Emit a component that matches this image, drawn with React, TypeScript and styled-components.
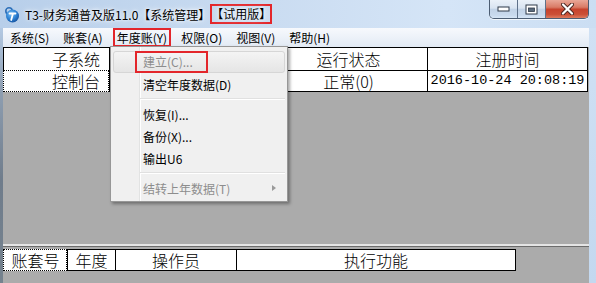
import React from 'react'
import styled, { createGlobalStyle, css } from 'styled-components'

const uiFont = `"Noto Sans CJK SC", "Microsoft YaHei", sans-serif`
const red = '#e3262b'

const GlobalStyle = createGlobalStyle`
  html, body {
    margin: 0;
    padding: 0;
    width: 596px;
    height: 283px;
    overflow: hidden;
    background: #ababab;
  }
  #root {
    width: 596px;
    height: 283px;
  }
`

const StyledWindow = styled.div`
  position: relative;
  width: 596px;
  height: 283px;
  display: flex;
  flex-direction: column;
  overflow: hidden;
  font-family: ${uiFont};
  background: #c2d6ee;
`

const StyledTitleBar = styled.div`
  flex: none;
  height: 28px;
  display: flex;
  align-items: flex-start;
  padding: 0 7px 0 3px;
  background: linear-gradient(to right, #b8cfea 0%, #cadcf1 45%, #d5e5f7 75%, #cbdef3 100%);
`

const StyledAppIcon = styled.svg`
  flex: none;
  margin-top: 6px;
`

const StyledTitle = styled.div`
  flex: 1;
  height: 28px;
  margin-left: 5px;
  display: flex;
  align-items: center;
  font-size: 12px;
  color: #000;
  white-space: nowrap;
  text-shadow: 0 0 6px #fff, 0 0 3px #fff;
`

const StyledTitleMark = styled.span`
  display: inline-block;
  line-height: 16px;
  padding: 2px 1px;
  box-shadow: inset 0 0 0 2px ${red};
`

const StyledCaptionButtons = styled.div`
  flex: none;
  display: flex;
  height: 18px;
  border: 1px solid #4c5d73;
  border-top: none;
  border-radius: 0 0 5px 5px;
  overflow: hidden;
  box-shadow: 0 1px 0 rgba(255, 255, 255, 0.7);
`

const StyledCaptionButton = styled.div<{ $close?: boolean }>`
  width: ${(p) => (p.$close ? 42 : 27)}px;
  display: flex;
  align-items: center;
  justify-content: center;
  background: ${(p) =>
    p.$close
      ? 'linear-gradient(#e9a797 0%, #d97b66 40%, #c7432d 52%, #cb4f36 80%, #de7b5f 100%)'
      : 'linear-gradient(#eaf1f9 0%, #d9e4f1 45%, #c2d3e7 52%, #c9daee 85%, #d7e6f6 100%)'};

  & + & {
    border-left: 1px solid #5f7189;
  }
`

const StyledBody = styled.div`
  flex: 1;
  display: flex;
  min-height: 0;
`

const StyledLeftFrame = styled.div`
  flex: none;
  width: 3px;
  background: linear-gradient(#b3c9e3 0%, #8e9eb1 25%, #6f7c8b 60%, #76838f 100%);
`

const StyledClient = styled.div`
  flex: none;
  width: 586px;
  display: flex;
  flex-direction: column;
`

const StyledRightFrame = styled.div`
  flex: 1;
  background: linear-gradient(#d0e1f4, #c3d8ef);
`

const StyledMenuBar = styled.div`
  flex: none;
  height: 19px;
  display: flex;
  font-size: 12px;
  color: #000;
  background: linear-gradient(#f7f9fd, #e2eaf4);
`

const StyledMenuItem = styled.div<{ $marked?: boolean }>`
  display: flex;
  align-items: center;
  padding: 0 7px;
  white-space: nowrap;

  ${(p) =>
    p.$marked &&
    css`
      padding: 0 4px;
      margin: 0 3px;
      box-shadow: inset 0 0 0 2px ${red};
    `}
`

const StyledWorkspace = styled.div`
  flex: 1;
  display: flex;
  flex-direction: column;
  padding-bottom: 12px;
  background: #ababab;
  font-family: ${uiFont};
  font-size: 16px;
  font-weight: 300;
  color: #000;
`

const StyledGrid = styled.div<{ $columns: string }>`
  align-self: flex-start;
  display: grid;
  grid-template-columns: ${(p) => p.$columns};
  background: #fff;
  border-left: 1px solid #000;
  border-top: 1px solid #000;
`

const StyledCell = styled.div<{
  $height: number
  $align?: 'center' | 'right'
  $focused?: boolean
  $mono?: boolean
}>`
  position: relative;
  height: ${(p) => p.$height}px;
  display: flex;
  align-items: center;
  justify-content: ${(p) => (p.$align === 'right' ? 'flex-end' : 'center')};
  padding-right: ${(p) => (p.$align === 'right' ? 9 : 0)}px;
  border-right: 1px solid #000;
  border-bottom: 1px solid #000;
  white-space: nowrap;
  line-height: 1;

  ${(p) =>
    p.$mono &&
    css`
      font-family: 'Liberation Mono', monospace;
      font-weight: 400;
      font-size: 13.5px;
    `}

  ${(p) =>
    p.$focused &&
    css`
      &::before,
      &::after {
        content: '';
        position: absolute;
        top: -1px;
        left: -1px;
        right: 0;
        bottom: -1px;
        border: 1px solid #fff;
        pointer-events: none;
      }
      &::after {
        border-style: dotted;
        border-color: #000;
      }
    `}
`

const StyledSpacer = styled.div`
  flex: 1;
`

const StyledSplitter = styled.div`
  flex: none;
  height: 0;
  margin-bottom: 2px;
  border-top: 2px solid #e4e4e4;
  border-bottom: 1px solid #6c6c6c;
`

const StyledDropdown = styled.div`
  position: absolute;
  left: 110px;
  top: 46px;
  width: 178px;
  box-sizing: border-box;
  padding: 4px 2px 2px;
  border: 1px solid #979797;
  background: linear-gradient(
    to right,
    #f0f0f0 28px,
    #e2e3e3 28px,
    #e2e3e3 29px,
    #ffffff 29px,
    #ffffff 30px,
    #f0f0f0 30px
  );
  box-shadow: 2px 2px 3px rgba(0, 0, 0, 0.35);
  font-family: ${uiFont};
  font-size: 12px;
`

const StyledDropItem = styled.div<{ $disabled?: boolean; $hover?: boolean }>`
  height: 22px;
  box-sizing: border-box;
  display: flex;
  align-items: center;
  padding: 0 8px 0 29px;
  border: 1px solid transparent;
  border-radius: 3px;
  color: ${(p) => (p.$disabled ? '#8d8d8d' : '#000')};
  white-space: nowrap;

  ${(p) =>
    p.$hover &&
    css`
      border-color: #d6d6d6;
      background: linear-gradient(#f4f4f4, #e5e5e5);
    `}
`

const StyledDropMark = styled.span`
  display: inline-block;
  line-height: 18px;
  margin-left: -6px;
  padding: 0 13px 0 6px;
  outline: 2px solid ${red};
`

const StyledDropSeparator = styled.div`
  height: 8px;
  margin-left: 27px;
  display: flex;
  align-items: center;

  &::before {
    content: '';
    flex: 1;
    height: 2px;
    background: linear-gradient(#e0e0e0 50%, #ffffff 50%);
  }
`

const StyledSubArrow = styled.span`
  margin-left: auto;
  width: 0;
  height: 0;
  border-top: 3.5px solid transparent;
  border-bottom: 3.5px solid transparent;
  border-left: 4px solid #9a9a9a;
`

const AppIcon = () => (
  <StyledAppIcon width="17" height="17" viewBox="0 0 17 17">
    <defs>
      <radialGradient id="ball" cx="0.4" cy="0.35" r="0.7">
        <stop offset="0" stopColor="#7cc0f4" />
        <stop offset="0.6" stopColor="#2a7fd2" />
        <stop offset="1" stopColor="#164f9a" />
      </radialGradient>
    </defs>
    <circle cx="6" cy="5" r="3.2" fill="none" stroke="#2d6fb8" strokeWidth="1.6" />
    <circle cx="9.5" cy="10" r="6.5" fill="url(#ball)" />
    <path d="M6.5 7.5h6M10 7.5l-1.8 6.5" stroke="#fff" strokeWidth="1.8" strokeLinecap="round" fill="none" />
  </StyledAppIcon>
)

const MinimizeGlyph = () => (
  <svg width="13" height="6" viewBox="0 0 13 6">
    <rect x="1" y="1" width="11" height="4" fill="#fff" stroke="#2f3b4a" strokeWidth="1" />
  </svg>
)

const MaximizeGlyph = () => (
  <svg width="13" height="11" viewBox="0 0 13 11">
    <rect x="1" y="1" width="11" height="9" fill="#fff" stroke="#2f3b4a" strokeWidth="1" />
    <rect x="3.5" y="4" width="6" height="3.5" fill="#5a6a7c" stroke="#2f3b4a" strokeWidth="0.8" />
  </svg>
)

const CloseGlyph = () => (
  <svg width="13" height="12" viewBox="0 0 13 12">
    <path d="M2 1.5l9 9M11 1.5l-9 9" stroke="#4a2520" strokeWidth="4" strokeLinecap="round" />
    <path d="M2 1.5l9 9M11 1.5l-9 9" stroke="#fff" strokeWidth="2.2" strokeLinecap="round" />
  </svg>
)

const topColumns = '106px 160px 158px 160px'
const bottomColumns = '64px 48px 121px 279px'

export default function App() {
  return (
    <>
      <GlobalStyle />
      <StyledWindow>
        <StyledTitleBar>
          <AppIcon />
          <StyledTitle>
            T3-财务通普及版11.0【系统管理】
            <StyledTitleMark>【试用版】</StyledTitleMark>
          </StyledTitle>
          <StyledCaptionButtons>
            <StyledCaptionButton>
              <MinimizeGlyph />
            </StyledCaptionButton>
            <StyledCaptionButton>
              <MaximizeGlyph />
            </StyledCaptionButton>
            <StyledCaptionButton $close>
              <CloseGlyph />
            </StyledCaptionButton>
          </StyledCaptionButtons>
        </StyledTitleBar>

        <StyledBody>
          <StyledLeftFrame />
          <StyledClient>
            <StyledMenuBar>
              <StyledMenuItem>系统(S)</StyledMenuItem>
              <StyledMenuItem>账套(A)</StyledMenuItem>
              <StyledMenuItem $marked>年度账(Y)</StyledMenuItem>
              <StyledMenuItem>权限(O)</StyledMenuItem>
              <StyledMenuItem>视图(V)</StyledMenuItem>
              <StyledMenuItem>帮助(H)</StyledMenuItem>
            </StyledMenuBar>

            <StyledWorkspace>
              <StyledGrid $columns={topColumns}>
                <StyledCell $height={22} $align="right">子系统</StyledCell>
                <StyledCell $height={22} />
                <StyledCell $height={22}>运行状态</StyledCell>
                <StyledCell $height={22}>注册时间</StyledCell>
                <StyledCell $height={20} $align="right" $focused>控制台</StyledCell>
                <StyledCell $height={20} />
                <StyledCell $height={20}>正常(0)</StyledCell>
                <StyledCell $height={20} $mono>2016-10-24 20:08:19</StyledCell>
              </StyledGrid>

              <StyledSpacer />
              <StyledSplitter />

              <StyledGrid $columns={bottomColumns}>
                <StyledCell $height={20} $focused>账套号</StyledCell>
                <StyledCell $height={20}>年度</StyledCell>
                <StyledCell $height={20}>操作员</StyledCell>
                <StyledCell $height={20}>执行功能</StyledCell>
              </StyledGrid>
            </StyledWorkspace>
          </StyledClient>
          <StyledRightFrame />
        </StyledBody>

        <StyledDropdown>
          <StyledDropItem $disabled $hover>
            <StyledDropMark>建立(C)...</StyledDropMark>
          </StyledDropItem>
          <StyledDropItem>清空年度数据(D)</StyledDropItem>
          <StyledDropSeparator />
          <StyledDropItem>恢复(I)...</StyledDropItem>
          <StyledDropItem>备份(X)...</StyledDropItem>
          <StyledDropItem>输出U6</StyledDropItem>
          <StyledDropSeparator />
          <StyledDropItem $disabled>
            结转上年数据(T)
            <StyledSubArrow />
          </StyledDropItem>
        </StyledDropdown>
      </StyledWindow>
    </>
  )
}
